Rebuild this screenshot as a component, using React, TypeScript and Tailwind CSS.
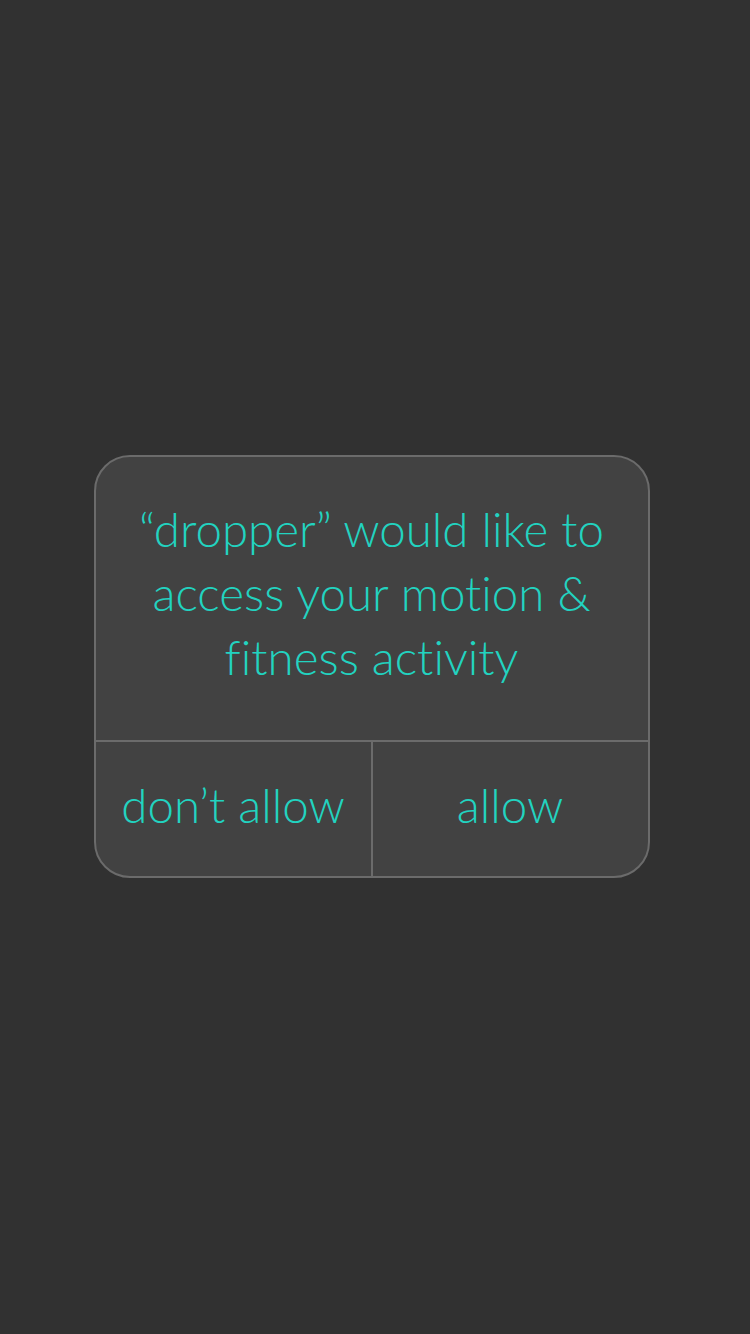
export default function App() {
    return (
        <div className="min-h-screen w-full bg-[#313131] flex items-center justify-center" style={{ fontFamily: "Lato, 'Open Sans', sans-serif" }}>
            {/* Permission dialog */}
            <div className="mr-[7px] mb-[2px] w-[556px] h-[423px] rounded-[36px] border-2 border-[#6b6b6b] bg-[#424242] overflow-hidden flex flex-col [font-variant-ligatures:none]">
                <div className="h-[283px] flex items-center justify-center pb-[10px]">
                    <p className="text-center text-[47.5px] font-light leading-[64px] text-[#22d3c0]">
                        “dropper” would like to
                        <br />
                        access your motion &amp;
                        <br />
                        fitness activity
                    </p>
                </div>
                <div className="flex-1 flex border-t-2 border-[#6b6b6b]">
                    <button className="w-[277px] border-r-2 border-[#6b6b6b] text-[47.5px] font-light text-[#22d3c0] pb-[7px]">
                        don’t allow
                    </button>
                    <button className="flex-1 text-[47.5px] font-light text-[#22d3c0] pb-[7px]">
                        allow
                    </button>
                </div>
            </div>
        </div>
    )
}
